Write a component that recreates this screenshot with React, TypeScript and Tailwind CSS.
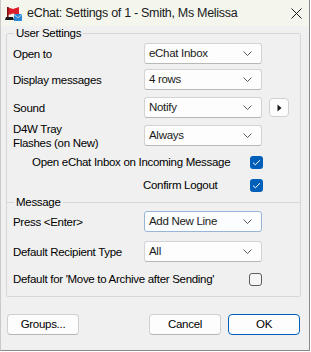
import React from 'react';

const font = { fontFamily: '"Liberation Sans", Arial, sans-serif' };

const Chevron = () => (
  <svg width="9" height="5" viewBox="0 0 9 5" className="shrink-0">
    <path d="M0.5 0.5 L4.5 4.5 L8.5 0.5" fill="none" stroke="#5a5a5a" strokeWidth="1" />
  </svg>
);

const Select = ({ value, focused = false }: { value: string; focused?: boolean }) => (
  <div
    className={
      focused
        ? 'w-[118px] h-[21px] flex items-center justify-between pl-[4px] pr-[9px] rounded-[3px] border border-[#98b4d8] bg-[#fbfdff] shrink-0'
        : 'w-[118px] h-[21px] flex items-center justify-between pl-[4px] pr-[9px] rounded-[3px] border border-[#d3d3d3] border-b-[#b8b8b8] bg-[#fdfdfd] shrink-0'
    }
  >
    <span className="text-[11.5px] text-[#1b1b1b] leading-none">{value}</span>
    <Chevron />
  </div>
);

const Check = ({ checked }: { checked: boolean }) =>
  checked ? (
    <div className="w-[13px] h-[13px] rounded-[3px] bg-[#005fb8] flex items-center justify-center shrink-0">
      <svg width="9" height="7" viewBox="0 0 9 7">
        <path d="M1 3.6 L3.3 5.8 L8 1.2" fill="none" stroke="#ffffff" strokeWidth="1" />
      </svg>
    </div>
  ) : (
    <div className="w-[13px] h-[13px] rounded-[3px] border border-[#5c5c5c] bg-[#f6f6f6] shrink-0" />
  );

const Row = ({ label, children, className = '' }: { label: React.ReactNode; children: React.ReactNode; className?: string }) => (
  <div className={`flex items-center pl-[6px] ${className}`}>
    <div className="w-[131px] text-[11.5px] leading-[14px] text-black">{label}</div>
    {children}
  </div>
);

const Button = ({ children, primary = false }: { children: React.ReactNode; primary?: boolean }) => (
  <div
    className={
      primary
        ? 'w-[72px] h-[21px] flex items-center justify-center rounded-[4px] border-[1.5px] border-[#005fb8] bg-[#fdfdfd] text-[11.5px] text-black'
        : 'w-[72px] h-[21px] flex items-center justify-center rounded-[4px] border border-[#d0d0d0] border-b-[#b5b5b5] bg-[#fdfdfd] text-[11.5px] text-black'
    }
  >
    {children}
  </div>
);

const AppIcon = () => (
  <svg width="18" height="18" viewBox="0 0 18 18">
    <path d="M3 3 L9 5 L15 3 L15 11 L9 9.5 L4.5 11 Z" fill="#d81f2a" />
    <rect x="3" y="3" width="1.6" height="11" fill="#7a1010" />
    <path d="M2 13 L9 13 L10 16 L1 16 Z" fill="#1a1a1a" />
    <rect x="10" y="10" width="8" height="7" rx="0.5" fill="#2b86d6" />
    <path d="M10 10.5 L14 13.8 L18 10.5" fill="none" stroke="#cfe6ff" strokeWidth="0.8" />
  </svg>
);

export default function App() {
  return (
    <div style={font} className="w-[311px] h-[352px] bg-white tracking-[-0.3px]">
      <div className="w-[310px] h-[351px] bg-[#f0f0f0] border-l border-l-[#c9c9c9] border-r border-r-[#8a8a8a] border-b border-b-[#8a8a8a] flex flex-col">
        {/* title bar */}
        <div className="h-[26px] bg-[#f4f6ee] flex items-center shrink-0">
          <div className="ml-[3px] w-[20px] flex items-center">
            <AppIcon />
          </div>
          <span className="ml-[3px] text-[12.5px] text-[#1a1a1a] whitespace-nowrap">
            eChat: Settings of 1 - Smith, Ms Melissa
          </span>
          <div className="ml-auto mr-[7px] w-[12px] h-[12px] flex items-center justify-center">
            <svg width="11" height="11" viewBox="0 0 11 11">
              <path d="M0.5 0.5 L10.5 10.5 M10.5 0.5 L0.5 10.5" stroke="#1a1a1a" strokeWidth="1" />
            </svg>
          </div>
        </div>

        {/* settings box */}
        <fieldset className="ml-[5px] w-[295px] border border-[#d7d7d7] rounded-[2px] pb-[10px]">
          <legend className="ml-[7px] px-[2px] text-[11.5px] leading-[14px] text-black">User Settings</legend>

          <Row label="Open to" className="mt-[3px] h-[21px]">
            <Select value="eChat Inbox" />
          </Row>
          <Row label="Display messages" className="mt-[5px] h-[21px]">
            <Select value="4 rows" />
          </Row>
          <Row label="Sound" className="mt-[7px] h-[21px]">
            <Select value="Notify" />
            <div className="ml-[7px] w-[20px] h-[19px] rounded-[4px] border border-[#d0d0d0] bg-[#fdfdfd] flex items-center justify-center">
              <svg width="5" height="8" viewBox="0 0 5 8">
                <path d="M0.5 0.5 L4.5 4 L0.5 7.5 Z" fill="#1a1a1a" />
              </svg>
            </div>
          </Row>
          <Row
            label={
              <>
                D4W Tray
                <br />
                Flashes (on New)
              </>
            }
            className="mt-[7px] h-[21px]"
          >
            <Select value="Always" />
          </Row>

          <div className="mt-[10px] h-[13px] flex items-center">
            <span className="ml-[25px] text-[11.5px] text-black whitespace-nowrap">Open eChat Inbox on Incoming Message</span>
            <div className="ml-auto mr-[37px]">
              <Check checked />
            </div>
          </div>
          <div className="mt-[10px] h-[13px] flex items-center">
            <span className="ml-[136px] text-[11.5px] text-black whitespace-nowrap">Confirm Logout</span>
            <div className="ml-auto mr-[37px]">
              <Check checked />
            </div>
          </div>

          {/* Message divider */}
          <div className="mt-[3px] h-[14px] flex items-center">
            <div className="w-[7px] border-t border-[#d7d7d7]" />
            <span className="px-[2px] text-[11.5px] leading-[14px] text-black">Message</span>
            <div className="flex-1 border-t border-[#d7d7d7]" />
          </div>

          <Row label="Press <Enter>" className="mt-[2px] h-[21px]">
            <Select value="Add New Line" focused />
          </Row>
          <Row label="Default Recipient Type" className="mt-[9px] h-[21px]">
            <Select value="All" />
          </Row>
          <div className="mt-[11px] h-[13px] flex items-center pl-[6px]">
            <span className="text-[11.5px] text-black whitespace-nowrap">Default for 'Move to Archive after Sending'</span>
            <div className="ml-auto mr-[38px]">
              <Check checked={false} />
            </div>
          </div>
        </fieldset>

        {/* buttons */}
        <div className="mt-[17px] flex items-center pl-[6px] pr-[9px]">
          <Button>Groups...</Button>
          <div className="ml-auto flex gap-[7px]">
            <Button>Cancel</Button>
            <Button primary>OK</Button>
          </div>
        </div>
      </div>
    </div>
  );
}
